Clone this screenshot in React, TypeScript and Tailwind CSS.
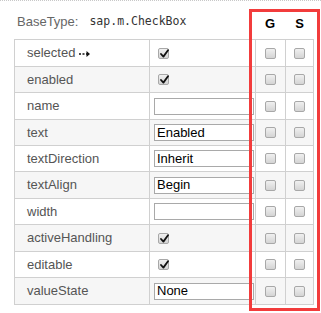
import React from 'react'

type Row = {
  name: string
  kind: 'check' | 'input'
  value?: string
  arrow?: boolean
}

const rows: Row[] = [
  { name: 'selected', kind: 'check', arrow: true },
  { name: 'enabled', kind: 'check' },
  { name: 'name', kind: 'input', value: '' },
  { name: 'text', kind: 'input', value: 'Enabled' },
  { name: 'textDirection', kind: 'input', value: 'Inherit' },
  { name: 'textAlign', kind: 'input', value: 'Begin' },
  { name: 'width', kind: 'input', value: '' },
  { name: 'activeHandling', kind: 'check' },
  { name: 'editable', kind: 'check' },
  { name: 'valueState', kind: 'input', value: 'None' },
]

// row heights incl. bottom border, to land on the reference lines
const heights = ['h-[27px]', 'h-[26px]', 'h-[27px]', 'h-[26px]', 'h-[26px]', 'h-[27px]', 'h-[26px]', 'h-[27px]', 'h-[26px]', 'h-[26px]']

function Box({ checked }: { checked?: boolean }) {
  return (
    <div className="relative h-[11px] w-[11px] rounded-[2px] border border-[#a8a8a8] bg-gradient-to-b from-[#f0f0f0] to-[#d4d4d4]">
      {checked && (
        <svg className="absolute left-[1px] top-[0px]" width="9" height="9" viewBox="0 0 9 9">
          <path d="M1 5 L3.4 7.6 L8 1.2" fill="none" stroke="#111" strokeWidth="1.8" strokeLinecap="round" strokeLinejoin="round" />
        </svg>
      )}
    </div>
  )
}

function DashArrow() {
  return (
    <svg width="12" height="8" viewBox="0 0 12 8" className="ml-[4px] mt-[1px]">
      <path d="M0 4 H2 M3.5 4 H5.5 M7 4 H9" stroke="#111" strokeWidth="1.4" />
      <path d="M7.5 1 L11 4 L7.5 7 Z" fill="#111" />
    </svg>
  )
}

export default function App() {
  return (
    <div className="relative h-[313px] w-[321px] overflow-hidden border-t border-dotted border-[#c8c8c8] bg-white font-['Liberation_Sans',Arial,sans-serif]">
      <div className="flex h-[38px] items-center">
        <div className="flex w-[241px] items-center pl-[17px] pt-[3px]">
          <span className="text-[13px] text-[#666]">BaseType:</span>
          <span className="ml-[11px] font-['DejaVu_Sans_Mono',monospace] text-[11.5px] text-[#333]">sap.m.CheckBox</span>
        </div>
        <div className="flex pl-[14px] pt-[8px]">
          <div className="w-[30px] text-center text-[13px] font-bold text-black">G</div>
          <div className="w-[29px] text-center text-[13px] font-bold text-black">S</div>
        </div>
      </div>

      <div className="ml-[14px] w-[300px] border border-[#d0d0d0]">
        {rows.map((r, i) => (
          <div
            key={r.name}
            className={`flex border-b border-[#d0d0d0] last:border-b-0 ${heights[i]} ${i % 2 === 1 ? 'bg-[#f6f6f6]' : 'bg-white'}`}
          >
            <div className="flex w-[135px] items-center border-r border-[#d0d0d0] pl-[12px] text-[13px] text-[#555]">
              {r.name}
              {r.arrow && <DashArrow />}
            </div>
            <div className="flex w-[106px] items-center border-r border-[#d0d0d0] pl-[4px]">
              {r.kind === 'check' ? (
                <div className="ml-[4px]">
                  <Box checked />
                </div>
              ) : (
                <div className="flex h-[17px] w-[100px] items-center border border-[#a9a9a9] bg-white pl-[2px] text-[13px] text-black">
                  {r.value}
                </div>
              )}
            </div>
            <div className="flex w-[30px] items-center justify-center border-r border-[#d0d0d0]">
              <Box />
            </div>
            <div className="flex w-[27px] items-center justify-center">
              <Box />
            </div>
          </div>
        ))}
      </div>

      <div className="absolute left-[249px] top-[8px] h-[302px] w-[71px] border-[3px] border-[#f23c3c]" />
    </div>
  )
}
